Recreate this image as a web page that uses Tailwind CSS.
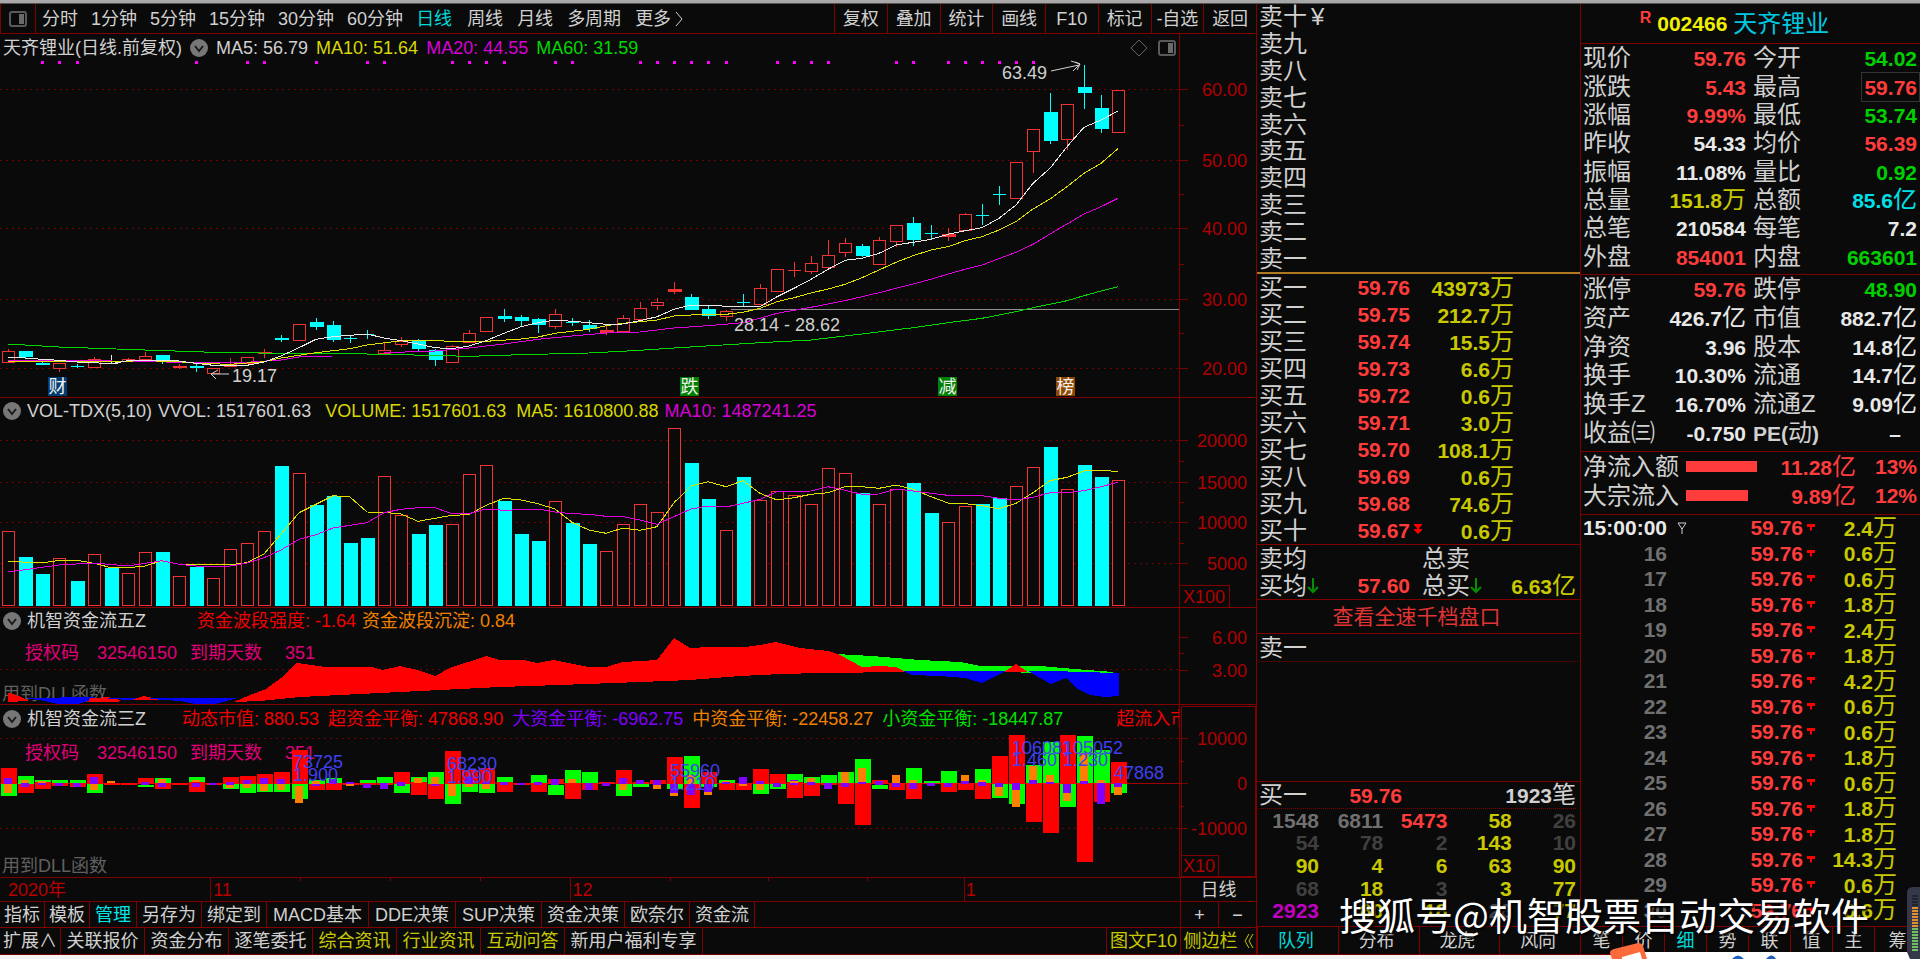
<!DOCTYPE html>
<html lang="zh-CN">
<head>
<meta charset="utf-8">
<title>天齐锂业 002466 日线</title>
<script src="https://cdn.jsdelivr.net/npm/@tailwindcss/browser@4"></script>
</head>
<body class="flex h-screen min-h-[900px] flex-col overflow-hidden bg-[#0a0a0a] font-['Liberation_Sans','Noto_Sans_CJK_SC',sans-serif] text-[18px] leading-none text-[#d0d0d0]">
<div class="h-1 shrink-0 border-b border-[#555] bg-[#a8a8a8]"></div>

<div class="flex min-h-0 flex-1">
  <!-- charts -->
  <main class="grid min-w-0 flex-1 grid-cols-1 grid-rows-[30px_364fr_210fr_97fr_173fr_24px_26px_27px] border-r border-[#800000] whitespace-nowrap">
    <nav class="flex min-w-0 items-stretch border-b border-[#800000]">
      <button aria-label="侧栏" class="flex w-9 shrink-0 items-center justify-center border-r border-l border-[#800000]">
        <svg width="18" height="16" viewBox="0 0 18 16" fill="none"><rect x="1" y="1" width="16" height="14" rx="2" stroke="#5a5a5a" stroke-width="2"/><rect x="10" y="3" width="5" height="10" fill="#6a6a6a"/></svg>
      </button>
      <div class="flex items-center gap-[13px] pl-1.5">
        <button>分时</button><button>1分钟</button><button>5分钟</button><button>15分钟</button><button>30分钟</button><button>60分钟</button><button class="text-[#00d8d8]">日线</button>
        <span class="flex items-center gap-3.5 pl-0.5"><button>周线</button><button>月线</button><button>多周期</button><button class="flex items-center gap-1">更多<svg width="8" height="16" viewBox="0 0 8 16" fill="none" stroke="#d0d0d0"><path d="M1 1l6 7-6 7"/></svg></button></span>
      </div>
      <div class="ml-auto grid w-[422px] shrink-0 grid-cols-8 *:border-l *:border-[#800000]">
        <button>复权</button><button>叠加</button><button>统计</button><button>画线</button><button>F10</button><button>标记</button><button>-自选</button><button>返回</button>
      </div>
    </nav>

    <section class="grid min-h-0 grid-cols-1 grid-rows-1 border-b border-[#800000]">
      <svg id="kline" class="h-full w-full [grid-area:1/1]" viewBox="0 34 1256 363" preserveAspectRatio="none"></svg>
      <header class="z-10 flex h-7 items-center gap-2 pl-[3px] [grid-area:1/1]">
        <h1>天齐锂业(日线.前复权)</h1>
        <svg width="18" height="18" viewBox="0 0 18 18" fill="none"><circle cx="9" cy="9" r="9" fill="#777"/><path d="M5 7l4 5 4-5" stroke="#1a1a1a" stroke-width="2"/></svg>
        <span>MA5: 56.79</span><span class="text-[#d8d800]">MA10: 51.64</span><span class="text-[#d800d8]">MA20: 44.55</span><span class="text-[#00d800]">MA60: 31.59</span>
        <span class="mr-20 ml-auto flex items-center gap-2.5">
          <svg width="18" height="18" viewBox="0 0 18 18" fill="none" stroke="#666"><path d="M9 1l8 8-8 8-8-8z"/></svg>
          <svg width="18" height="16" viewBox="0 0 18 16" fill="none"><rect x="1" y="1" width="16" height="14" rx="2" stroke="#5a5a5a" stroke-width="2"/><rect x="10" y="3" width="5" height="10" fill="#6a6a6a"/></svg>
        </span>
      </header>
    </section>

    <section class="grid min-h-0 grid-cols-1 grid-rows-1 border-b border-[#800000]">
      <svg id="vol" class="h-full w-full [grid-area:1/1]" viewBox="0 398 1256 209" preserveAspectRatio="none"></svg>
      <header class="z-10 flex h-[26px] items-center gap-1.5 pl-[3px] [grid-area:1/1]">
        <svg width="18" height="18" viewBox="0 0 18 18" fill="none"><circle cx="9" cy="9" r="9" fill="#777"/><path d="M5 7l4 5 4-5" stroke="#1a1a1a" stroke-width="2"/></svg>
        <span>VOL-TDX(5,10)</span><span class="mr-2">VVOL: 1517601.63</span><span class="mr-1 text-[#d8d800]">VOLUME: 1517601.63</span><span class="text-[#d8d800]">MA5: 1610800.88</span><span class="text-[#d800d8]">MA10: 1487241.25</span>
      </header>
    </section>

    <section class="grid min-h-0 grid-cols-1 grid-rows-1 border-b border-[#800000]">
      <svg id="flow" class="h-full w-full [grid-area:1/1]" viewBox="0 608 1256 96" preserveAspectRatio="none"></svg>
      <header class="z-10 flex h-[26px] items-center gap-1.5 pl-[3px] [grid-area:1/1]">
        <svg width="18" height="18" viewBox="0 0 18 18" fill="none"><circle cx="9" cy="9" r="9" fill="#777"/><path d="M5 7l4 5 4-5" stroke="#1a1a1a" stroke-width="2"/></svg>
        <span class="w-[164px]">机智资金流五Z</span><span class="text-[#f00000]">资金波段强度: -1.64</span><span class="text-[#f08000]">资金波段沉淀: 0.84</span>
      </header>
    </section>

    <section class="grid min-h-0 grid-cols-1 grid-rows-1 border-b border-[#800000]">
      <svg id="funds" class="h-full w-full [grid-area:1/1]" viewBox="0 705 1256 172" preserveAspectRatio="none"></svg>
      <header class="z-10 mr-[77px] flex h-7 min-w-0 items-center gap-1.5 overflow-hidden pl-[3px] [grid-area:1/1]">
        <svg class="shrink-0" width="18" height="18" viewBox="0 0 18 18" fill="none"><circle cx="9" cy="9" r="9" fill="#777"/><path d="M5 7l4 5 4-5" stroke="#1a1a1a" stroke-width="2"/></svg>
        <span class="w-[149px] shrink-0">机智资金流三Z</span>
        <span class="flex gap-[9px]"><span class="text-[#f00000]">动态市值: 880.53</span><span class="text-[#f00000]">超资金平衡: 47868.90</span><span class="text-[#8000ff]">大资金平衡: -6962.75</span><span class="text-[#f08000]">中资金平衡: -22458.27</span><span class="mr-11 text-[#00e000]">小资金平衡: -18447.87</span><span class="text-[#f00000]">超流入市值</span></span>
      </header>
    </section>

    <div class="grid min-h-0 grid-cols-[1fr_76px] border-b border-[#800000]">
      <svg id="dates" class="h-full w-full" viewBox="0 0 1179 23" preserveAspectRatio="none"></svg>
      <button class="border-l border-[#800000]">日线</button>
    </div>

    <div class="flex items-stretch border-b border-[#800000]">
      <div class="flex *:border-r *:border-[#800000]">
        <button class="px-1">指标</button><button class="px-1">模板</button><button class="px-[5px] text-[#00e8e8]">管理</button><button class="px-[5px]">另存为</button><button class="px-[5px]">绑定到</button><button class="px-1.5">MACD基本</button><button class="px-1.5">DDE决策</button><button class="px-1.5">SUP决策</button><button class="px-[5px]">资金决策</button><button class="px-[5px]">欧奈尔</button><button class="px-[5px]">资金流</button>
      </div>
      <div class="ml-auto grid w-[76px] shrink-0 grid-cols-2 *:border-l *:border-[#800000]"><button>+</button><button>−</button></div>
    </div>

    <div class="flex items-stretch border-b border-[#800000]">
      <div class="flex *:border-r *:border-[#800000]">
        <button class="w-[61px]">扩展∧</button><button class="w-[84px]">关联报价</button><button class="w-[84px]">资金分布</button><button class="w-[84px]">逐笔委托</button><button class="w-[84px] text-[#c8c800]">综合资讯</button><button class="w-[84px] text-[#c8c800]">行业资讯</button><button class="w-[84px] text-[#c8c800]">互动问答</button><button class="w-[138px]">新用户福利专享</button>
      </div>
      <div class="ml-auto flex shrink-0 text-[#c8c800] *:border-l *:border-[#800000]"><button class="w-[74px]">图文F10</button><button class="flex w-[76px] items-center justify-center gap-1.5">侧边栏<svg width="10" height="14" viewBox="0 0 10 14" fill="none" stroke="#c8c800"><path d="M5 0L1 7l4 7M9 0L5 7l4 7"/></svg></button></div>
    </div>
  </main>

  <!-- order book -->
  <aside class="flex w-[324px] shrink-0 flex-col border-r border-[#800000] text-[24px] whitespace-nowrap">
    <div id="asks" class="grid h-[270px] shrink-0 grid-rows-10 items-center border-b-2 border-[#b07820] pl-[2px]"></div>
    <div id="bids" class="grid h-[271px] shrink-0 grid-rows-10 items-center border-b border-[#800000] pl-[2px]"></div>
    <div class="grid h-[55px] shrink-0 grid-cols-[98px_53px_84px_1fr] grid-rows-2 items-center border-b border-[#800000] pr-1 pl-[2px]">
      <span>卖均</span><span></span><span class="pl-3">总卖</span><span></span>
      <span class="flex items-center">买均<svg width="12" height="16" viewBox="0 0 12 16" fill="none" stroke="#009000" stroke-width="2"><path d="M6 0v13M1 9l5 5 5-5"/></svg></span>
      <b class="justify-self-end text-[21px] text-[#ff3c3c]">57.60</b>
      <span class="flex items-center pl-3">总买<svg width="12" height="16" viewBox="0 0 12 16" fill="none" stroke="#009000" stroke-width="2"><path d="M6 0v13M1 9l5 5 5-5"/></svg></span>
      <span class="justify-self-end text-[#c8c800]"><b class="text-[21px]">6.63</b>亿</span>
    </div>
    <div class="flex h-[34px] shrink-0 items-center justify-center border-b border-[#800000] pr-1"><a href="#" class="text-[21px] text-[#e03434]">查看全速千档盘口</a></div>
    <div class="min-h-0 flex-1 border-b border-[#800000] px-[2px]"><div class="flex h-7 items-center border-b border-dotted border-[#800000]">卖一</div></div>
    <div class="h-[145px] shrink-0 border-b border-[#800000] pr-1 pl-[2px]">
      <div class="grid h-[27px] grid-cols-[143px_1fr] items-center border-b border-dotted border-[#800000]">
        <span class="flex items-center justify-between">买一<b class="text-[21px] text-[#ff3c3c]">59.76</b></span>
        <span class="justify-self-end"><b class="text-[21px]">1923</b>笔</span>
      </div>
      <div id="queue" class="grid h-[113px] grid-cols-[60px_1fr_1fr_1fr_1fr] grid-rows-5 items-center text-right text-[21px] font-bold"></div>
    </div>
    <nav class="grid h-[28px] shrink-0 grid-cols-4 border-b border-[#800000] text-[18px] *:border-l *:border-[#800000]">
      <button class="pr-1 text-[#00d8d8]">队列</button><button class="pr-1">分布</button><button class="pr-1">龙虎</button><button class="pr-1">风向</button>
    </nav>
  </aside>

  <!-- quote and ticks -->
  <aside class="flex w-[339px] shrink-0 flex-col text-[24px]">
    <div class="flex h-10 shrink-0 items-center justify-center gap-1.5 border-b border-[#800000] pr-8">
      <span class="mb-3 text-[16px] font-bold text-[#ff3c3c]">R</span><b class="text-[21px] text-[#f0f000]">002466</b><span class="text-[#00c8e0]">天齐锂业</span>
    </div>
    <div id="quote1" class="grid h-[231px] shrink-0 grid-rows-8 items-center border-b border-[#800000] pr-[3px] pb-[3px] pl-[2px]"></div>
    <div id="quote2" class="grid h-[177px] shrink-0 grid-rows-6 items-center border-b border-[#800000] pr-[3px] pb-1 pl-[2px]"></div>
    <div class="grid h-[63px] shrink-0 grid-cols-[103px_72px_1fr_61px] grid-rows-2 items-center border-b border-[#800000] pr-[3px] pb-1 pl-[2px] text-[#ff3c3c]">
      <span class="text-[#d0d0d0]">净流入额</span><span class="h-[11px] w-[71px] bg-[#ff3c3c]"></span><span class="justify-self-end"><b class="text-[21px]">11.28</b>亿</span><b class="justify-self-end text-[21px]">13%</b>
      <span class="text-[#d0d0d0]">大宗流入</span><span class="h-[11px] w-[62px] bg-[#ff3c3c]"></span><span class="justify-self-end"><b class="text-[21px]">9.89</b>亿</span><b class="justify-self-end text-[21px]">12%</b>
    </div>
    <div class="min-h-0 flex-1 overflow-hidden border-b border-[#800000]">
      <table class="h-[408px] w-full border-collapse"><tbody id="ticks"></tbody></table>
    </div>
    <nav class="grid h-[28px] shrink-0 grid-cols-[repeat(7,42px)_1fr] border-b border-[#800000] text-[18px] *:not-last:border-r *:border-[#800000]">
      <button>笔</button><button>价</button><button class="text-[#00d8d8]">细</button><button>势</button><button>联</button><button>值</button><button>主</button><button>筹</button>
    </nav>
  </aside>
</div>
<div class="h-1 shrink-0 bg-[#f4f4f4]"></div>

<!-- window overlays -->
<svg class="absolute right-0 bottom-0 z-10" width="310" height="72" viewBox="0 0 310 72">
  <path d="M20 72v-3q0-4 6-4h284v7z" fill="#fff"/>
  <path d="M2 72l-2-6q0-3 4-4l24-6q4 0 5 3l4 13z" fill="#ff6a3a"/><path d="M12 70l18-5 2 7H12z" fill="#fff"/>
  <path d="M122 72q6-7 12 0zM156 72q6-7 10 0z" fill="#2060c0"/>
  <path d="M297 65V6q0-6 6-6h7v72h-10z" fill="#343848"/>
  <g stroke-width="6" stroke-dasharray="2 1"><path d="M305 8v12" stroke="#202430"/><path d="M305 20v20" stroke="#e09030"/><path d="M305 41v24" stroke="#70c060"/></g>
</svg>
<p class="absolute right-[51px] bottom-[26px] z-20 text-[38px] whitespace-nowrap text-white [font-family:'Noto_Sans_CJK_SC',sans-serif] [text-shadow:2px_2px_2px_#000]">搜狐号@机智股票自动交易软件</p>

<script>
const $ = id => document.getElementById(id);
const X = i => Math.round(8.2 + 17.08 * i);
const rect = (x, y, w, h, f, s) => `<rect x="${x}" y="${y}" width="${w}" height="${h}" fill="${f}"${s ? ` stroke="${s}"` : ''}/>`;
const line = (x1, y1, x2, y2, c, extra = '') => `<line x1="${x1}" y1="${y1}" x2="${x2}" y2="${y2}" stroke="${c}" ${extra}/>`;
const text = (x, y, t, c, anchor = 'start') => `<text x="${x}" y="${y}" fill="${c}" text-anchor="${anchor}">${t}</text>`;
const curve = (pts, c, off) => `<polyline fill="none" stroke="${c}" points="${pts.split(' ').map(p => { const [i, y] = p.split(':'); return X(i - 1) + ',' + (off + y / 3).toFixed(1); }).join(' ')}"/>`;
const grid = ys => ys.map(y => line(0, y + .5, 1179, y + .5, '#700000', 'stroke-dasharray="2 4"')).join('');
const axis = (top, bottom, marks, minor) => line(1179.5, top, 1179.5, bottom, '#800000') +
  marks.map(([y, t]) => line(1180, y + .5, 1188, y + .5, '#800000') + text(1247, y + 7, t, '#b00000', 'end')).join('') +
  minor.map(y => line(1180, y + .5, 1184, y + .5, '#800000')).join('');
const crisp = s => `<g shape-rendering="crispEdges">${s}</g>`;
const RED = '#f03434', CY = '#00ffff', MG = '#e000e0', YE = '#e0e000', GR = '#00d800', WH = '#e8e8e8';

/* daily candles: kind, high, body top, body bottom, low (thirds of a unit) */
const K = `R 1048 1054 1087 1087|C 1052 1052 1071 1078|C 1087 1088 1093 1093|R 1090 1090 1105 1115|D 1093 1099 1099 1105|R 1072 1077 1101 1104|W 1066 1090 1090 1090|R 1073 1077 1082 1082|R 1057 1068 1078 1078|C 1066 1066 1082 1093|F 1092 1098 1105 1108|C 1090 1097 1103 1115|R 1104 1104 1118 1120|R 1075 1092 1098 1100|R 1072 1072 1090 1090|F 1048 1055 1063 1075|C 1004 1013 1019 1026|R 972 972 1020 1020|C 953 967 980 990|C 962 975 1019 1025|D 1008 1013 1013 1030|D 990 1003 1003 1018|R 1030 1050 1060 1060|R 1012 1022 1032 1040|C 1018 1022 1046 1053|C 1048 1050 1079 1098|R 1035 1037 1087 1087|R 990 999 1025 1025|R 950 950 992 992|C 926 948 956 967|C 944 950 963 980|C 955 958 975 998|R 927 941 979 988|D 953 965 965 979|C 960 975 987 996|F 975 989 998 1006|R 945 955 994 994|R 905 923 957 957|R 895 905 916 930|F 846 868 876 882|C 882 890 931 931|C 915 926 948 958|R 930 933 947 963|D 882 907 907 920|R 851 865 912 912|R 806 806 872 872|E 787 811 811 832|R 769 790 812 822|R 720 766 800 800|R 715 730 755 770|C 733 738 769 772|R 712 721 791 791|R 676 676 722 740|C 652 670 720 738|D 675 699 699 716|F 684 703 710 724|R 640 643 689 694|D 612 646 646 676|D 558 582 582 616|R 487 487 593 593|R 388 388 454 518|C 279 337 423 432|R 312 312 416 450|C 194 262 279 328|C 284 324 386 400|R 270 270 395 395`.split('|');
let s = grid([89, 160, 228, 299, 368]);
K.forEach((k, i) => {
  const [t, ...v] = k.split(' '), [h, a, b, l] = v.map(n => Math.round(n / 3)), x = X(i);
  const c = t === 'C' || t === 'D' ? CY : t === 'W' ? WH : RED;
  if (a > h) s += line(x + .5, h, x + .5, a, c);
  if (l > b) s += line(x + .5, b, x + .5, l, c);
  if ('DEW'.includes(t)) s += line(x - 6, a + .5, x + 7, a + .5, c);
  else if (t === 'R') s += rect(x - 5.5, a + .5, 12, Math.max(b - a, 1), 'none', c);
  else s += rect(x - 6, a, 14, Math.max(b - a, 2), c);
});
[3,4,5,12,15,16,19,22,23,27,28,29,30,33,34,38,39,40,41,42,43,46,47,48,49,53,54,56,57,58,59,60,61].forEach(i => s += rect(X(i - 1) - 1, 61, 3, 3, '#ff00ff'));
s += line(731, 309.5, 1179, 309.5, '#909090');
s += curve('1:1032 4:1041 9:1050 13:1057 17:1060 20:1060 24:1064 28:1069 31:1064 35:1059 38:1051 40:1044 45:1028 48:1020 51:1002 54:983 56:968 58:955 60:935 61:923 63:902 64:887 65:873 66:860', GR, 0);
s += curve('1:1081 5:1081 10:1086 15:1087 17:1080 18:1071 20:1068', MG, 0) + curve('23:1058 26:1053 28:1044 30:1032 32:1018 34:1008 36:999 38:996 40:984 42:977 44:968 45:955 46:940 48:922 50:902 52:878 54:852 55:838 56:822 57:808 58:795 60:757 61:733 62:702 63:672 64:642 65:620 66:595', MG, 0);
s += curve('1:1085 4:1085 6:1086 9:1082 11:1085 12:1090 14:1093 16:1085 17:1074 19:1058 21:1046 22:1035 24:1022 25:1020 27:1024 29:1024 31:1017 32:1011 33:1000 35:988 36:977 37:970 38:965 39:960 40:948 41:945 43:943 44:937 45:925 46:905 47:893 48:879 49:867 50:853 51:833 52:810 53:787 54:767 55:750 56:740 57:722 58:710 59:690 60:665 61:627 62:597 63:560 64:520 65:490 66:446', YE, 0);
s += curve('1:1073 2:1074 3:1078 4:1081 5:1086 6:1088 7:1091 8:1082 11:1083 12:1090 13:1096 14:1098 15:1096 16:1086 17:1068 18:1043 19:1018 20:1010 21:1006 22:1002 23:1014 24:1022 25:1032 26:1043 27:1046 28:1038 29:1022 30:1000 31:980 32:968 33:960 34:964 35:968 36:973 37:972 38:962 39:950 40:928 41:915 42:915 43:919 45:920 46:890 47:865 48:838 49:808 50:781 51:775 52:760 53:735 54:727 55:718 56:703 57:692 58:683 59:655 60:615 61:550 62:505 63:440 64:382 65:360 66:333', WH, 0);
s = crisp(s);
s += text(1002, 79, '63.49', '#d0d0d0') + `<path d="M1051 71l28-6M1071 61l9 3-7 7M1075 62l5 2-3 6" fill="none" stroke="#d0d0d0"/>`;
s += text(232, 382, '19.17', '#d0d0d0') + `<path d="M229 374h-17M218 370l-7 4 5 5" fill="none" stroke="#d0d0d0"/>`;
s += text(734, 331, '28.14 - 28.62', '#d0d0d0');
[[48, '财', '#003c70'], [680, '跌', '#008000'], [938, '减', '#008000'], [1056, '榜', '#904800']].forEach(([x, t, c]) => s += rect(x, 377, 19, 19, c) + text(x + 9.5, 393, t, '#f0f0f0', 'middle'));
s += crisp(axis(34, 397, [[89, '60.00'], [160, '50.00'], [228, '40.00'], [299, '30.00'], [368, '20.00']], [125, 194, 264, 333]));
$('kline').innerHTML = s;

/* volume */
const V = 'R424 C500 C553 R505 C572 R491 C535 R549 R487 C486 R559 C530 R563 R478 R460 R424 C229 R248 C345 C318 C459 C445 R257 R374 C432 C405 R401 R252 R226 C332 C432 C454 R334 C400 C463 R482 R401 R343 R366 R114 C220 C328 R420 C261 R329 R303 R316 R343 R235 R248 C310 R343 R297 C279 C369 R397 R348 C342 C324 R289 R230 C171 R298 C225 C261 R270'.split(' ');
s = grid([440, 482, 522, 563]);
V.forEach((v, i) => {
  const y = 390 + Math.round(v.slice(1) / 3), x = X(i);
  s += v[0] === 'C' ? rect(x - 6, y, 14, 606 - y, CY) : rect(x - 5.5, y + .5, 12, 605 - y, '#0a0a0a', RED);
});
s += curve('1:514 3:519 4:511 5:511 6:520 7:533 8:533 9:528 10:512 11:523 14:524 15:518 16:492 17:432 18:368 19:343 20:317 21:321 22:366 23:367 24:372 25:394 26:385 27:376 28:374 29:346 30:325 31:330 32:341 33:357 34:397 35:420 36:430 37:414 38:421 39:410 40:338 41:288 42:275 43:290 44:272 45:310 46:330 47:323 48:313 49:308 50:290 51:290 52:295 53:285 54:298 55:320 56:339 57:341 58:347 59:356 60:340 61:308 62:272 63:262 64:243 65:240 66:245', YE, 390);
s += curve('1:546 2:539 4:525 6:519 8:528 10:512 11:523 12:528 14:528 15:519 16:503 17:480 18:448 19:434 20:414 21:406 22:398 23:368 24:358 25:353 26:353 27:371 28:371 29:357 30:361 32:357 33:366 34:371 35:373 36:379 37:380 38:390 39:403 40:380 41:357 42:348 43:351 44:340 45:328 46:305 48:303 49:290 50:301 51:313 52:312 53:297 54:303 55:310 56:316 58:317 59:325 60:330 61:322 62:308 63:308 64:302 65:290 66:277', MG, 390);
s = crisp(s + axis(398, 607, [[440, '20000'], [482, '15000'], [522, '10000'], [563, '5000']], [461, 502, 543]) + rect(1179.5, 585.5, 50, 22, 'none', '#800000')) + text(1183, 603, 'X100', '#b00000');
$('vol').innerHTML = s;

/* capital band flow */
const poly = (p, c) => `<polygon points="${p}" fill="${c}"/>`;
s = text(2, 700, '用到DLL函数', '#606060') + line(0, 669.5, 1179, 669.5, '#700000', 'stroke-dasharray="2 4"');
s += poly('8,693 14,694 28,700 28,701 8,702', '#f00') + poly('24,698 96,697 90,700 78,704 58,704 45,701', '#00f') + poly('90,698 97,698 108,697 120,700 118,702 88,702', '#f00');
s += poly('106,698 140,698 132,700 110,699', '#00f') + poly('131,700 144,696 158,699 158,700', '#f00') + poly('150,698 238,698 215,704 195,704 180,701 150,699', '#00f');
s += poly('836,654 872,656 920,660 960,662 980,666 1040,666 1075,669 1113,672 1113,674 1060,673 903,671 862,667', '#0f0');
s += poly('234,702 250,695 266,689 281,678 297,663 325,667 372,667 383,670 400,666 417,670 435,676 452,667 468,662 486,656 500,660 524,660 537,663 554,660 588,667 606,667 623,662 657,660 674,638 690,648 710,647 745,647 760,645 776,642 800,648 829,651 840,655 862,667 880,666 896,667 906,672 820,673 781,674 740,676 690,680 640,682 560,685 500,687 440,690 300,697 260,701', '#f00');
s += poly('903,671 1006,671 982,683 965,678 940,676 912,675', '#00f') + poly('1004,672 1016,664 1028,672', '#f00') + poly('1028,671 1055,671 1080,672 1119,673 1119,696 1105,697 1090,695 1078,689 1066,678 1051,684 1040,678', '#00f');
s = crisp(s + axis(608, 704, [[637, '6.00'], [670, '3.00']], [653]));
const lic = y => text(25, y, '授权码', '#e0007a') + text(97, y, '32546150', '#e0007a') + text(190, y, '到期天数', '#e0007a') + text(285, y, '351', '#e0007a');
$('flow').innerHTML = s + lic(659);

/* fund balance bars: r/g wide, o/p narrow */
const B = `r234-283 g283-319 o283-310 p265-283|g257-281 r281-310 o270-280 p280-292|g270-281 r276-298 o272-280 p278-285|g270-280 r280-288 p280-288|g270-280 r278-291 p278-291|r252-283 g283-310 p262-283 o283-300|r280-284 o274-280|r279-285|r265-283 g284-292 p275-284|g265-280 r280-298 o268-280 p280-292|r280-284|g261-280 r276-305 o270-276 p278-291|r280-284 p280-284|r262-283 g283-298 o283-293 p276-284|r257-283 g283-310 o283-295 p271-283|r252-283 g283-305 o283-303 p265-283|r247-283 g283-305 o283-300 p268-283|r180-283 g283-328 o287-338|g270-281 r281-300 o274-281 p281-288|g264-281 r279-300 p268-283|r280-284 p275-283 o283-288|g270-281 r279-284 p281-293|g262-279 r279-284 p279-297|r247-283 g283-310 p275-287|g262-281 r276-315 o265-279|g247-281 r281-328 o262-281 p281-287|r184-283 g283-341 o283-319|r240-283 g283-305 p262-281 o283-292|r235-283 g283-310 p275-283 o283-297|g262-280 r276-305 p277-286|r280-284 p280-284|g256-281 r278-305 p275-284|r266-283 g284-314 p268-284|g239-280 r280-328 o268-280|g247-279 r279-301 p280-300|r275-283 p279-288|r239-283 g283-319 p265-283 o283-301|r275-283 g283-292 p270-283|r270-283 p270-284 o284-297|r202-283 g283-297 p283-310 o310-319|g198-281 r281-355 o256-281 p281-315|r247-283 g283-291 p283-306 o306-315|g270-279 r280-300 o272-278 p277-283|r280-300 p262-283 o283-288|r238-283 g283-311 p274-283 o283-301|r252-283 g283-297 p279-290|g252-276 r276-324 p270-285 o274-278|g261-278 r279-319 o265-279 p276-284|g256-279 r279-284 p279-297|g247-279 r279-341 o247-279 p279-292|g207-279 r279-404 o234-279 p276-283|r270-283 g284-297 p274-284|r279-300 o256-279 p279-291|g234-279 r279-328 o270-279 p279-297|g273-279 r279-283 p279-288|g243-279 r279-306 p279-292|r279-300 o256-274 p274-283|g238-279 r279-328 o270-279 p276-288|r198-283 g283-323 o287-319 p279-290|r135-283 g283-341 p279-300 o300-350|g225-279 r279-395 o229-270 p269-283|g157-279 r279-428 o256-276 p276-283|r135-283 g283-350 p283-310 o310-333|g139-279 r279-517 o190-274 p274-283|g180-279 r279-337 o270-279 p279-341|r216-283 g283-310 p279-292 o292-315`.split('|');
const COL = { r: '#ff0000', g: '#00ff00', o: '#ff8000', p: '#8000ff' };
s = grid([738, 828]) + line(0, 783.5, 1179, 783.5, '#a00000');
B.forEach((b, i) => b.split(' ').forEach(e => {
  const [a, z] = e.slice(1).split('-').map(n => 690 + Math.round(n / 3)), wide = 'rg'.includes(e[0]);
  s += rect(X(i) - (wide ? 7 : 4), a, wide ? 16 : 8, Math.max(z - a, 1), COL[e[0]]);
}));
s = lic(759) + crisp(s);
[[293, 768, '73725'], [293, 781, '1.900'], [447, 770, '68230'], [447, 783, '1.990'], [670, 777, '55960'], [670, 790, '1.210'], [1012, 754, '106081'], [1063, 754, '105052'], [1012, 766, '1.460'], [1063, 766, '1.230'], [1114, 779, '47868']].forEach(([x, y, t]) => s += text(x, y, t, '#4040f0'));
s += text(2, 872, '用到DLL函数', '#606060');
s += crisp(axis(705, 877, [[738, '10000'], [783, '0'], [828, '-10000']], [761, 806]) + rect(1181, 706, 74, 170, 'none', '#800000') + rect(1181.5, 855.5, 37, 21, 'none', '#800000')) + text(1183, 872, 'X10', '#b00000');
$('funds').innerHTML = s;

/* date axis */
$('dates').innerHTML = crisp([210, 570, 963].map(x => line(x + .5, 0, x + .5, 23, '#800000')).join('') + [300, 390, 480, 669, 767, 866].map(x => line(x + .5, 0, x + .5, 3, '#800000')).join('')) +
  [[8, '2020年'], [213, '11'], [572, '12'], [965, '1']].map(([x, t]) => text(x, 18, t, '#b80000')).join('');

/* order book */
const N = '一二三四五六七八九十';
$('asks').innerHTML = [...N].reverse().map(n => `<div>卖${n}${n === '十' ? '<span class="pl-1">¥</span>' : ''}</div>`).join('');
$('bids').innerHTML = '43973 212.7 15.5 6.6 0.6 3.0 108.1 0.6 74.6 0.6'.split(' ').map((v, i) => `<div class="grid grid-cols-[98px_53px_104px] items-center"><span>买${N[i]}</span><b class="relative text-right text-[21px] text-[#ff3c3c]">59.${76 - i}${i === 9 ? '<svg class="absolute top-1 left-full ml-1" width="8" height="10" viewBox="0 0 8 10" fill="#f00"><path d="M0 0h8v1L5 4v1h3v1L4 10 0 6V5h3V4L0 1z"/></svg>' : ''}</b><span class="text-right text-[#c8c800]"><b class="text-[21px]">${v}</b>万</span></div>`).join('');
const Q = { g: 'text-[#707070]', d: 'text-[#404040]', r: 'text-[#ff3c3c]', y: 'text-[#c8c800]', m: 'text-[#c000c0]' };
$('queue').innerHTML = 'g1548 g6811 r5473 y58 d26 d54 d78 d2 y143 d10 y90 y4 y6 y63 y90 d68 y18 d3 y3 y77 m2923 y60 y18 d26 y77'.split(' ').map(q => `<span class="${Q[q[0]]}">${q.slice(1)}</span>`).join('');

/* quote */
const C = { r: 'text-[#ff3c3c]', g: 'text-[#00d000]', w: 'text-[#e8e8e8]', y: 'text-[#c8c800]', c: 'text-[#00e0e8]' };
const val = v => { const u = /[万亿]$/.test(v) ? v.slice(-1) : ''; return `<b class="text-[21px]">${v.slice(1, u ? -1 : undefined)}</b>${u}`; };
const quote = rows => rows.map(([a, b, c, d, cls = '']) => `<div class="grid grid-cols-[77px_86px_1fr_auto] items-center"><span class="whitespace-nowrap">${a}</span><span class="text-right whitespace-nowrap ${C[b[0]]}">${val(b)}</span><span class="pl-[7px] whitespace-nowrap">${c}</span><span class="text-right ${C[d[0]]} ${cls}">${val(d)}</span></div>`).join('');
$('quote1').innerHTML = quote([['现价', 'r59.76', '今开', 'g54.02'], ['涨跌', 'r5.43', '最高', 'r59.76', 'outline outline-offset-2 outline-[#333]'], ['涨幅', 'r9.99%', '最低', 'g53.74'], ['昨收', 'w54.33', '均价', 'r56.39'], ['振幅', 'w11.08%', '量比', 'g0.92'], ['总量', 'y151.8万', '总额', 'c85.6亿'], ['总笔', 'w210584', '每笔', 'w7.2'], ['外盘', 'r854001', '内盘', 'g663601']]);
$('quote2').innerHTML = quote([['涨停', 'r59.76', '跌停', 'g48.90'], ['资产', 'w426.7亿', '市值', 'w882.7亿'], ['净资', 'w3.96', '股本', 'w14.8亿'], ['换手', 'w10.30%', '流通', 'w14.7亿'], ['换手Z', 'w16.70%', '流通Z', 'w9.09亿'], ['收益㈢', 'w-0.750', '<b class="text-[21px]">PE(</b>动<b class="text-[21px]">)</b>', 'w–', 'pr-4']]);

/* ticks */
$('ticks').innerHTML = '2.4 0.6 0.6 1.8 2.4 1.8 4.2 0.6 0.6 1.8 0.6 1.8 1.8 14.3 0.6 0.6'.split(' ').map((v, i) => `<tr class="h-[25px]"><td class="w-[86px] p-0 text-right text-[21px] font-bold ${i ? 'text-[#707070]' : 'text-[#e8e8e8]'}">${i ? 15 + i : '15:00:00'}</td><td class="w-[30px] p-0 pl-2.5">${i ? '' : '<svg width="10" height="12" viewBox="0 0 10 12" fill="none" stroke="#d0d0d0"><path d="M1 1h8L5 7zM5 6v6"/></svg>'}</td><td class="w-[106px] p-0 text-right text-[21px] font-bold text-[#ff3c3c]">59.76</td><td class="w-3 p-0 pl-1"><svg width="8" height="7" viewBox="0 0 8 7" fill="#f00"><path d="M0 0h8v3H5v3L4 7 3 6V3H0z"/></svg></td><td class="p-0 pr-[23px] text-right text-[#c8c800]"><b class="text-[21px]">${v}</b>万</td></tr>`).join('');
</script>
</body>
</html>
